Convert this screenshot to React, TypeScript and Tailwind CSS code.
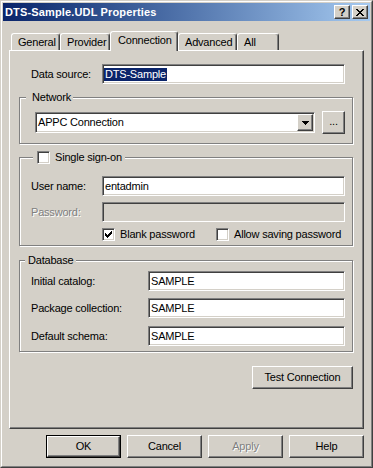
import type { ReactNode } from "react";

// Win2000 style 3D edges
const raised =
  "border border-t-white border-l-white border-r-[#404040] border-b-[#404040] shadow-[inset_-1px_-1px_0_#808080]";
const sunken =
  "border border-t-[#808080] border-l-[#808080] border-r-white border-b-white shadow-[inset_1px_1px_0_#404040,inset_-1px_-1px_0_#d4d0c8]";
const etched = "border border-[#808080] shadow-[inset_1px_1px_0_#fff,1px_1px_0_#fff]";
const grayed = "text-[#808080] [text-shadow:1px_1px_0_#fff]";

function CheckBox({ checked }: { checked?: boolean }) {
  return (
    <span className={`flex h-[13px] w-[13px] shrink-0 items-center justify-center bg-white ${sunken}`}>
      {checked && (
        <svg width="7" height="7" viewBox="0 0 7 7" shapeRendering="crispEdges">
          <path
            fill="#000"
            d="M6 0h1v1h-1z M5 1h2v1h-2z M0 2h1v1h-1z M4 2h3v1h-3z M0 3h2v1h-2z M3 3h3v1h-3z M0 4h5v1h-5z M1 5h3v1h-3z M2 6h1v1h-1z"
          />
        </svg>
      )}
    </span>
  );
}

function TextBox({
  value,
  className,
  disabled,
  selected,
}: {
  value?: string;
  className: string;
  disabled?: boolean;
  selected?: boolean;
}) {
  return (
    <div
      className={`flex h-[20px] shrink-0 items-center pl-[2px] ${disabled ? "bg-[#d4d0c8]" : "bg-white"} ${sunken} ${className}`}
    >
      {selected ? (
        <span className="ml-[-1px] bg-[#0a246a] pl-[1px] pr-[1px] text-white">{value}</span>
      ) : (
        <span>{value}</span>
      )}
    </div>
  );
}

function Button({
  children,
  disabled,
  isDefault,
  className = "w-[75px]",
}: {
  children: ReactNode;
  disabled?: boolean;
  isDefault?: boolean;
  className?: string;
}) {
  const face = (
    <div className={`flex h-full w-full items-center justify-center ${raised} ${disabled ? grayed : ""}`}>
      {children}
    </div>
  );
  if (isDefault) {
    return <div className={`h-[23px] border border-black ${className}`}>{face}</div>;
  }
  return <div className={`h-[23px] ${className}`}>{face}</div>;
}

const TABS = [
  { label: "General", w: "w-[49px]" },
  { label: "Provider", w: "w-[50px]" },
  { label: "Connection", w: "w-[68px]", active: true },
  { label: "Advanced", w: "w-[59px]" },
  { label: "All", w: "w-[42px]" },
];

export default function App() {
  return (
    <div className="h-[468px] w-[373px] border border-t-[#d4d0c8] border-l-[#d4d0c8] border-r-[#404040] border-b-[#404040] bg-[#d4d0c8] font-[Liberation_Sans,Arial,sans-serif] text-[11px] leading-[13px] tracking-[-0.2px] text-black select-none">
      <div className="flex h-full flex-col border border-t-white border-l-white border-r-[#808080] border-b-[#808080] p-[1px]">
        {/* Title bar */}
        <div className="flex h-[18px] shrink-0 items-center justify-between bg-linear-to-r from-[#0a246a] to-[#a6caf0] pl-[2px] pr-[2px]">
          <span className="font-bold tracking-[0.15px] text-white">DTS-Sample.UDL Properties</span>
          <div className="flex gap-[2px]">
            <div className={`flex h-[14px] w-[16px] items-center justify-center bg-[#d4d0c8] ${raised}`}>
              <span className="text-[11px] leading-[11px] font-bold">?</span>
            </div>
            <div className={`flex h-[14px] w-[16px] items-center justify-center bg-[#d4d0c8] ${raised}`}>
              <svg width="8" height="7" viewBox="0 0 8 7" shapeRendering="crispEdges">
                <path
                  fill="#000"
                  d="M0 0h2v1h-2z M6 0h2v1h-2z M1 1h2v1h-2z M5 1h2v1h-2z M2 2h4v1h-4z M3 3h2v1h-2z M2 4h4v1h-4z M1 5h2v1h-2z M5 5h2v1h-2z M0 6h2v1h-2z M6 6h2v1h-2z"
                />
              </svg>
            </div>
          </div>
        </div>

        <div className="flex flex-col px-[6px]">
          {/* Tabs */}
          <div className="relative z-10 mt-[10px] flex h-[19px] items-end pl-[2px]">
            {TABS.map((t) =>
              t.active ? (
                <div
                  key={t.label}
                  className={`relative z-10 mb-[-1px] flex h-[20px] items-center rounded-t-[3px] border-t border-r border-l border-t-white border-r-[#404040] border-l-white bg-[#d4d0c8] pb-[3px] pl-[7px] shadow-[inset_-1px_0_0_#808080] ${t.w}`}
                >
                  {t.label}
                </div>
              ) : (
                <div
                  key={t.label}
                  className={`flex h-[17px] items-center rounded-t-[3px] border-t border-r border-l border-t-white border-r-[#404040] border-l-white pt-[1px] pl-[6px] shadow-[inset_-1px_0_0_#808080] ${t.w}`}
                >
                  {t.label}
                </div>
              )
            )}
          </div>

          {/* Tab panel */}
          <div className="flex h-[379px] flex-col border border-t-white border-l-white border-r-[#404040] border-b-[#404040] pt-[13px] pr-[10px] pl-[9px] shadow-[inset_-1px_-1px_0_#808080]">
            <div className="flex h-[20px] items-center">
              <span className="w-[83px] shrink-0 pl-[12px]">Data source:</span>
              <TextBox value="DTS-Sample" selected className="w-[243px]" />
            </div>

            {/* Network */}
            <div className={`relative mt-[13px] h-[47px] ${etched}`}>
              <span className="absolute top-[-7px] left-[6px] h-[13px] bg-[#d4d0c8] pr-[2px] pl-[6px]">Network</span>
              <div className="mt-[13px] ml-[15px] flex items-center gap-[7px]">
                <div className={`flex h-[21px] w-[280px] items-center bg-white ${sunken}`}>
                  <span className="flex-1 pl-[2px]">APPC Connection</span>
                  <span className={`mr-[1px] flex h-[17px] w-[16px] items-center justify-center bg-[#d4d0c8] ${raised}`}>
                    <svg width="7" height="4" viewBox="0 0 7 4" shapeRendering="crispEdges">
                      <path fill="#000" d="M0 0h7v1h-1v1h-1v1h-1v1h-1v-1h-1v-1h-1v-1h-1z" />
                    </svg>
                  </span>
                </div>
                <Button className="w-[23px]">
                  <span className="pb-[2px]">...</span>
                </Button>
              </div>
            </div>

            {/* Single sign-on */}
            <div className={`relative mt-[13px] flex h-[89px] flex-col pl-[11px] ${etched}`}>
              <div className="absolute top-[-7px] left-[13px] flex h-[13px] items-center gap-[5px] bg-[#d4d0c8] pr-[3px] pl-[4px]">
                <CheckBox />
                <span>Single sign-on</span>
              </div>
              <div className="mt-[18px] flex items-center">
                <span className="w-[71px] shrink-0">User name:</span>
                <TextBox value="entadmin" className="w-[243px]" />
              </div>
              <div className="mt-[6px] flex items-center">
                <span className={`w-[71px] shrink-0 ${grayed}`}>Password:</span>
                <TextBox disabled className="w-[243px]" />
              </div>
              <div className="mt-[6px] flex h-[13px] items-center pl-[71px]">
                <CheckBox checked />
                <span className="ml-[5px] w-[96px]">Blank password</span>
                <CheckBox />
                <span className="ml-[5px]">Allow saving password</span>
              </div>
            </div>

            {/* Database */}
            <div className={`relative mt-[14px] flex h-[92px] flex-col pl-[11px] ${etched}`}>
              <span className="absolute top-[-7px] left-[5px] h-[13px] bg-[#d4d0c8] pr-[2px] pl-[3px]">Database</span>
              <div className="mt-[10px] flex items-center">
                <span className="w-[117px] shrink-0">Initial catalog:</span>
                <TextBox value="SAMPLE" className="w-[197px]" />
              </div>
              <div className="mt-[7px] flex items-center">
                <span className="w-[117px] shrink-0">Package collection:</span>
                <TextBox value="SAMPLE" className="w-[197px]" />
              </div>
              <div className="mt-[8px] flex items-center">
                <span className="w-[117px] shrink-0">Default schema:</span>
                <TextBox value="SAMPLE" className="w-[197px]" />
              </div>
            </div>

            <div className="mt-[14px] flex justify-end">
              <Button className="w-[101px]">Test Connection</Button>
            </div>
          </div>

          {/* Dialog buttons */}
          <div className="mt-[6px] flex justify-end gap-[6px]">
            <Button isDefault>OK</Button>
            <Button>Cancel</Button>
            <Button disabled>Apply</Button>
            <Button>Help</Button>
          </div>
        </div>
      </div>
    </div>
  );
}
